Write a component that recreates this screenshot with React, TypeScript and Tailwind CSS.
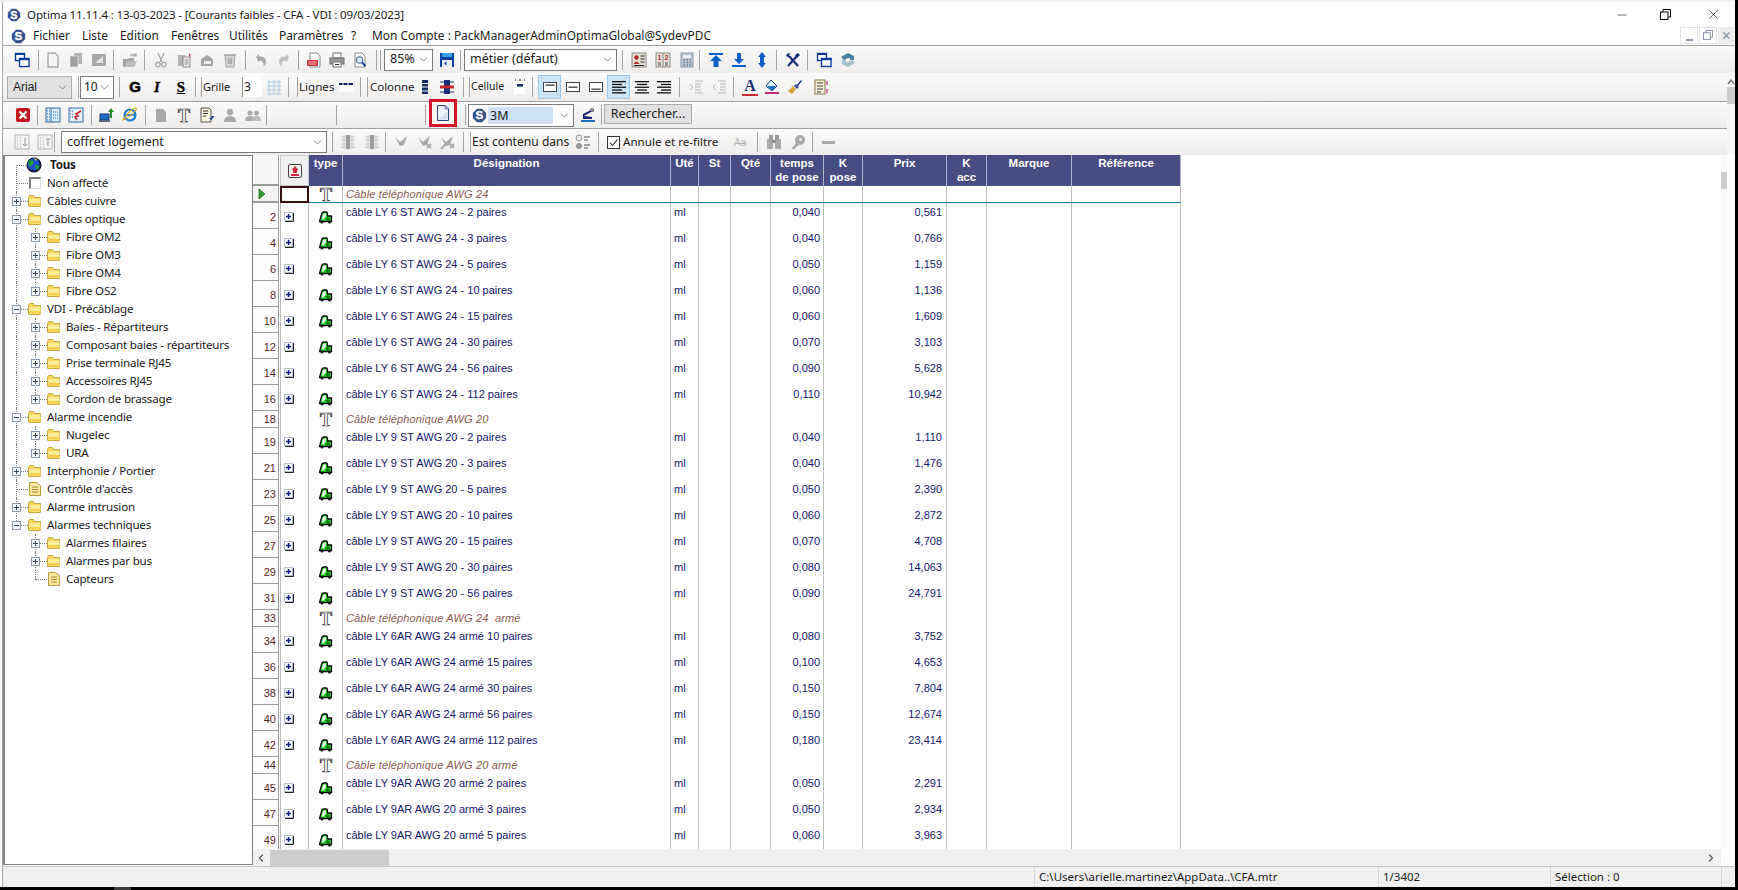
import type { ReactNode } from "react";
import { ChevronDown, ChevronLeft, ChevronRight, Minus, X } from "lucide-react";

const G = "#a9a9a9";
const NAVY = "#0b3a9e";

const Ic = ({ children, className = "" }: { children: ReactNode; className?: string }) => (
  <svg viewBox="0 0 16 16" className={`w-4 h-4 shrink-0 ${className}`}>
    {children}
  </svg>
);

const Sep = ({ className = "" }: { className?: string }) => (
  <div className={`w-px h-[20px] bg-[#a3a3a3] shrink-0 ${className}`} />
);

const Logo = ({ className = "" }: { className?: string }) => (
  <svg viewBox="0 0 18 18" className={`shrink-0 ${className}`}>
    <path d="M6 1h6l5 5v6l-5 5H6l-5-5V6z" fill="#34508f" />
    <text x="9" y="13.500" textAnchor="middle" fontSize="14" fontWeight="700" fontFamily="Liberation Sans" fill="#fff" stroke="#fff" strokeWidth=".4">S</text>
  </svg>
);

const Restore = ({ className = "" }: { className?: string }) => (
  <svg viewBox="0 0 11 11" className={`shrink-0 ${className}`}>
    <rect x=".5" y="3" width="7.500" height="7.500" fill="#fff" stroke="currentColor" />
    <path d="M3 3V.5h7.500V8H8" fill="none" stroke="currentColor" />
  </svg>
);

// --- toolbar pictures
const Win = () => (
  <Ic>
    <rect x="1.500" y="1.500" width="9" height="7" fill="#fff" stroke={NAVY} strokeWidth="1.400" />
    <rect x="1" y="1" width="10" height="2" fill={NAVY} />
    <rect x="5.500" y="6.500" width="9.500" height="8" fill="#fff" stroke={NAVY} strokeWidth="1.400" />
    <rect x="5" y="6" width="10.500" height="2.200" fill={NAVY} />
  </Ic>
);
const NewGray = () => (
  <Ic>
    <path d="M3 1h7l3 3v11H3z" fill="#f4f4f4" stroke={G} strokeWidth="1.400" />
  </Ic>
);
const CopyGray = () => (
  <Ic>
    <rect x="6" y="1" width="8" height="11" fill="#b3b3b3" />
    <path d="M2 4h8v11H2z" fill="#a0a0a0" stroke="#eee" strokeWidth=".6" />
  </Ic>
);
const SaveGray = () => (
  <Ic>
    <rect x="1" y="2" width="14" height="12" fill="#a8a8a8" />
    <path d="M4 11l8-7v7z" fill="#e4e4e4" />
  </Ic>
);
const OpenGray = () => (
  <Ic>
    <path d="M1 7h5l1-1h5v9H1z" fill="#a5a5a5" />
    <path d="M3 15l2-6h10l-3 6z" fill="#bdbdbd" />
    <path d="M8 4q3-3 6 0M14 1v3h-3" fill="none" stroke={G} strokeWidth="1.200" />
  </Ic>
);
const Cut = () => (
  <Ic>
    <path d="M5 1l4 9M11 1l-4 9" stroke={G} strokeWidth="1.300" />
    <circle cx="5" cy="12.500" r="2.200" fill="none" stroke={G} strokeWidth="1.300" />
    <circle cx="11" cy="12.500" r="2.200" fill="none" stroke={G} strokeWidth="1.300" />
  </Ic>
);
const PasteGray = () => (
  <Ic>
    <rect x="2" y="3" width="7" height="11" fill="#b5b5b5" />
    <rect x="7" y="5" width="7" height="10" fill="#eee" stroke="#8a8a8a" />
    <path d="M8.500 8h4M8.500 10h4M8.500 12h4" stroke="#8a8a8a" />
    <path d="M13 1l1 1.400 1.400.2-1 1 .3 1.400-1.700-.7z" fill="#c8405a" />
  </Ic>
);
const Stamp = () => (
  <Ic>
    <path d="M2 7l6-4 6 4v7H2z" fill="#a6a6a6" />
    <rect x="5" y="9" width="7" height="3" fill="#eee" />
  </Ic>
);
const Recycle = () => (
  <Ic>
    <path d="M3 3h10l-1 12H4z" fill="#d6d6d6" stroke={G} />
    <path d="M2 3h12M6 6l1 6M10 6l-1 6M8 6v6" stroke="#9a9a9a" />
  </Ic>
);
const Undo = () => (
  <Ic>
    <path d="M3 5l3-3v2.500c5 0 7 2 7 5 0 2-1 3.500-2.500 5 .5-3-.5-6-4.500-6V11z" fill={G} />
  </Ic>
);
const Redo = () => (
  <Ic>
    <path d="M13 5l-3-3v2.500c-5 0-7 2-7 5 0 2 1 3.500 2.500 5-.5-3 .5-6 4.500-6V11z" fill="#c0c0c0" />
  </Ic>
);
const Pdf = () => (
  <Ic>
    <path d="M4 1h7l3 3v11H4z" fill="#fff" stroke="#8a8a8a" />
    <rect x="1" y="8" width="11" height="6" fill="#d8343a" />
    <path d="M2.500 10h8M2.500 12h8" stroke="#f3b4b4" />
  </Ic>
);
const Print = () => (
  <Ic>
    <rect x="4" y="1" width="8" height="5" fill="#fff" stroke="#6f6f6f" />
    <rect x="1" y="6" width="14" height="6" fill="#9a9a9a" stroke="#6a6a6a" />
    <rect x="4" y="10" width="8" height="5" fill="#fff" stroke="#6f6f6f" />
    <path d="M6 12.500h4" stroke="#333" />
  </Ic>
);
const Preview = () => (
  <Ic>
    <path d="M3 1h7l3 3v11H3z" fill="#fff" stroke="#8a8a8a" />
    <circle cx="7.500" cy="8" r="3.200" fill="#d8eafa" stroke="#5a7fa8" strokeWidth="1.200" />
    <path d="M10 10.500l3.500 3.500" stroke={NAVY} strokeWidth="1.800" />
  </Ic>
);
const SaveBlue = () => (
  <Ic>
    <rect x="1" y="1" width="14" height="14" fill="#0d3f9f" />
    <rect x="3" y="1" width="10" height="4" fill="#37a4e8" />
    <rect x="3" y="8" width="10" height="7" fill="#e8eef8" />
    <path d="M5 11.500l2.500-2v4z" fill="#0d3f9f" />
  </Ic>
);
const Card = () => (
  <Ic>
    <rect x="1" y="1" width="14" height="14" fill="#e8e0d6" stroke="#8a8a8a" />
    <circle cx="5.500" cy="5.500" r="2.200" fill="#b02a30" />
    <path d="M2.500 12q3-5 6 0z" fill="#b02a30" />
    <path d="M9.500 4h4M9.500 7h4M9.500 10h4M3 13.500h10" stroke="#222" />
  </Ic>
);
const Num12 = () => (
  <Ic>
    <rect x="1" y="1" width="14" height="14" fill="#e9e2d9" stroke="#8a8a8a" />
    <path d="M8 1v14" stroke="#8a8a8a" />
    <text x="4.500" y="8" textAnchor="middle" fontSize="7" fontWeight="700" fontFamily="Liberation Sans" fill="#b02a30">1</text>
    <text x="11.500" y="8" textAnchor="middle" fontSize="7" fontWeight="700" fontFamily="Liberation Sans" fill="#b02a30">2</text>
    <path d="M3 11h3M3 13h3M10 11h3M10 13h3" stroke="#444" />
  </Ic>
);
const Calc = () => (
  <Ic>
    <rect x="2" y="1" width="12" height="14" fill="#b8c6d6" stroke="#8a9aae" />
    <rect x="4" y="3" width="8" height="3" fill="#e8eef4" />
    <path d="M4.500 8h1.500M7.500 8h1.500M10.500 8h1.500M4.500 10.500h1.500M7.500 10.500h1.500M10.500 10.500h1.500M4.500 13h1.500M7.500 13h1.500M10.500 13h1.500" stroke="#6a7c92" strokeWidth="1.300" />
  </Ic>
);
const ArrTop = () => (
  <Ic>
    <rect x="1" y="1" width="14" height="2" fill="#0a5fc8" />
    <path d="M8 3l6 6h-3.500v6h-5V9H2z" fill="#0a5fc8" />
  </Ic>
);
const ArrDown = () => (
  <Ic>
    <rect x="1" y="13" width="14" height="2" fill="#0a5fc8" />
    <path d="M8 12L3 7h3V1h4v6h3z" fill="#0a5fc8" />
  </Ic>
);
const ArrBoth = () => (
  <Ic>
    <path d="M8 0l4 5h-2v6h2l-4 5-4-5h2V5H4z" fill="#0a5fc8" />
  </Ic>
);
const Tools = () => (
  <Ic>
    <path d="M3 14L12 4" stroke="#16307a" strokeWidth="2.200" />
    <path d="M13 14L4 4" stroke="#16307a" strokeWidth="2.200" />
    <path d="M1 4q1-3 4-3L4 4l1 2z" fill="#16307a" />
    <path d="M10 3l3-2 2 2-3 3z" fill="#16307a" />
  </Ic>
);
const Swirl = () => (
  <Ic>
    <path d="M8 1l6 3v4h-4V6H8L4 8 1 5z" fill="#4a7f9f" />
    <path d="M8 15l-6-3V8h4v2h2l4-2 3 3z" fill="#a8c0c8" />
  </Ic>
);
const GridIcon = () => (
  <Ic>
    <path d="M1 3h14M1 7h14M1 11h14M1 15h14M3 1v15M8 1v15M13 1v15" stroke="#a8cbe8" />
  </Ic>
);
const Lines = () => (
  <Ic>
    <rect x="1" y="7" width="14" height="6" fill="#fff" />
    <rect x="1" y="4" width="14" height="2" fill="#0e1f5c" />
    <path d="M5 4v2M10 4v2" stroke="#fff" />
  </Ic>
);
const ColBars = () => (
  <Ic>
    <rect x="5" y="1" width="6" height="3" fill="#0e2f66" />
    <rect x="5" y="5" width="6" height="2.500" fill="#0e2f66" />
    <rect x="5" y="8.500" width="6" height="3" fill="#0e2f66" />
    <rect x="5" y="12.500" width="6" height="2.500" fill="#0e2f66" />
  </Ic>
);
const ColRed = () => (
  <Ic>
    <rect x="5" y="1" width="6" height="14" fill="#1a2f7a" />
    <path d="M1 3h14M1 13h14" stroke="#1a2f7a" />
    <rect x="1" y="6.500" width="14" height="3" fill="#c8262c" />
  </Ic>
);
const CellIc = () => (
  <Ic>
    <rect x="2" y="2" width="12" height="13" fill="#fff" />
    <path d="M3 1h1M7 1h2M12 1h1" stroke="#0e1f5c" />
    <rect x="5" y="5" width="6" height="2.500" fill="#0e2f66" />
  </Ic>
);
const Frame = ({ y }: { y: number }) => (
  <Ic>
    <rect x="1.500" y="3.500" width="13" height="9" fill="#fff" stroke="#444" />
    <rect x="3.500" y={y} width="9" height="1.500" fill="#555" />
  </Ic>
);
const Align = ({ kind }: { kind: "l" | "c" | "r" }) => {
  const rows = [
    [1, 14],
    [kind === "l" ? 1 : kind === "c" ? 3 : 5, 10],
    [1, 14],
    [kind === "l" ? 1 : kind === "c" ? 3 : 5, 10],
    [1, 14],
  ];
  return (
    <Ic>
      {rows.map(([x, w], i) => (
        <rect key={i} x={x} y={2 + i * 2.800} width={w} height="1.300" fill="#111" />
      ))}
    </Ic>
  );
};
const Indent = ({ flip }: { flip?: boolean }) => (
  <Ic>
    <path d={flip ? "M7 2h8M9 5h6M9 8h6M9 11h6M7 14h8" : "M7 2h8M7 5h6M7 8h6M7 11h6M7 14h8"} stroke="#b5b5b5" />
    <path d={flip ? "M5 5L2 8l3 3" : "M2 5l3 3-3 3"} fill="none" stroke="#b5b5b5" />
  </Ic>
);
const Paint = () => (
  <Ic>
    <path d="M7 1l6 6-5 5-6-5z" fill="#dff0fa" stroke="#1a4a8a" />
    <path d="M3 7h9l-4 5z" fill="#1f6fc0" />
    <rect x="1" y="13" width="14" height="2" fill="#c8287a" />
  </Ic>
);
const Brush = () => (
  <Ic>
    <path d="M9 7L14 1l1 1-5 6z" fill="#1a2f8a" />
    <path d="M9 5l3 3-2 2-3-3z" fill="#3a4fa0" />
    <path d="M6 7l3 3-4 5-4-3z" fill="#d8a040" />
  </Ic>
);
const Dims = () => (
  <Ic>
    <rect x="2" y="1" width="10" height="14" fill="#f3ecd8" stroke="#8a7a4a" />
    <path d="M4 4h6M4 7h6M4 10h6M4 13h4" stroke="#444" />
    <path d="M14 2v4M14 10v4" stroke="#c8287a" strokeWidth="1.200" />
  </Ic>
);
const RedX = () => (
  <Ic>
    <rect x="1" y="1" width="14" height="14" rx="2" fill="#c4161c" />
    <path d="M4.500 4.500l7 7M11.500 4.500l-7 7" stroke="#fff" strokeWidth="2.400" />
  </Ic>
);
const GridDots = () => (
  <Ic>
    <rect x="1" y="1" width="14" height="14" fill="#d9eefc" stroke="#2a6aa8" />
    <path d="M6 1v14" stroke="#2a6aa8" />
    <path d="M2 4h3M2 7h3M2 10h3M2 13h3M8 5h5M8 8h5M8 11h5" stroke="#2a6aa8" strokeDasharray="1 1" />
  </Ic>
);
const GridPin = () => (
  <Ic>
    <rect x="1" y="1" width="14" height="14" fill="#e4f2fc" stroke="#2a6aa8" />
    <path d="M2 4h3M2 7h3M2 10h3" stroke="#2a6aa8" strokeDasharray="1 1" />
    <path d="M13 4L8 7l2 2-3 1 2 3" fill="none" stroke="#c8262c" strokeWidth="1.600" />
  </Ic>
);
const Export = () => (
  <Ic>
    <rect x="1" y="7" width="9" height="6" fill="#1d6fc0" stroke="#12356e" />
    <rect x="0" y="13" width="11" height="2" fill="#5b6b7c" />
    <path d="M12 1l3 4h-2v6h-2V5H9z" fill="#2a8f2a" />
  </Ic>
);
const Ie = () => (
  <Ic>
    <circle cx="8" cy="8" r="5.500" fill="none" stroke="#1d7fd8" strokeWidth="2.200" />
    <path d="M3 8h10" stroke="#1d7fd8" strokeWidth="1.800" />
    <path d="M1 13q5-1 13-10 1-2-1-2-4 1-11 10-2 3-1 2z" fill="none" stroke="#e8a820" strokeWidth="1.100" />
  </Ic>
);
const DocGray = () => (
  <Ic>
    <path d="M3 2h7l3 3v10H3z" fill="#a8a8a8" />
  </Ic>
);
// the viewBox is larger than the letter's box so the glyph is not clipped
const THollow = () => (
  <svg viewBox="0 0 24 24" className="w-6 h-6 -m-1 shrink-0">
    <text x="12" y="18.500" textAnchor="middle" fontSize="18" fontWeight="700" fontFamily="Liberation Serif" fill="#fff" stroke="#1c1c1c" strokeWidth=".7">T</text>
  </svg>
);
const Note = () => (
  <Ic>
    <path d="M2 1h8l2 2v12H2z" fill="#f8f3d8" stroke="#555" />
    <path d="M4 4h5M4 6.500h5M4 9h3" stroke="#333" />
    <path d="M15 5v5l-3 3-2-2h2l1-1-1-1h3" fill={NAVY} />
  </Ic>
);
const User = () => (
  <Ic>
    <circle cx="8" cy="5" r="3.200" fill={G} />
    <path d="M2 15q0-6 6-6t6 6z" fill={G} />
  </Ic>
);
const Users = () => (
  <Ic>
    <circle cx="5" cy="6" r="2.500" fill={G} />
    <circle cx="11.500" cy="6" r="2.500" fill={G} />
    <path d="M0 14q0-5 5-5t5 5z" fill={G} />
    <path d="M7 14q0-5 4.500-5t4.500 5z" fill="#bbb" />
  </Ic>
);
const DocBlue = () => (
  <svg viewBox="0 0 12 16" className="w-[12px] h-4 shrink-0">
    <path d="M.5.500h7.500l3.500 3.500v11.500H.5z" fill="#f0f3fb" stroke="#30407a" />
    <path d="M8 .5v3.500h3.500z" fill="#c8d0e8" stroke="#30407a" strokeWidth=".6" />
    <path d="M1.500 13q5 0 9-7v8.500h-9z" fill="#d5dcf0" />
  </svg>
);
const Robot = () => (
  <Ic>
    <path d="M3 7l8-4 3-1v2l-3 1-7 4 8 1v2H3z" fill="#14236a" />
    <rect x="1" y="13" width="14" height="2" fill="#1d6fc0" />
    <circle cx="12" cy="3" r="1.500" fill="#c8c8c8" stroke="#555" />
  </Ic>
);
const SortA = ({ up }: { up?: boolean }) => (
  <Ic>
    <rect x="1" y="1" width="14" height="14" fill="#f2f2f2" stroke="#b5b5b5" />
    <path d="M3 4h1M6 4h1M3 7h1M6 7h1M3 10h1M6 10h1M3 13h1M6 13h1" stroke="#aaa" />
    <path d={up ? "M11 12V4M9 6l2-2 2 2" : "M11 4v8M9 10l2 2 2-2"} fill="none" stroke="#999" />
  </Ic>
);
const Grid2 = () => (
  <Ic>
    <path d="M1 3h14M1 6h14M1 10h14M1 13h14M4 1v14M8 1v14M12 1v14" stroke="#c2c2c2" />
    <rect x="6" y="1" width="4" height="14" fill="#9c9c9c" />
  </Ic>
);
const Tick = ({ n }: { n: number }) => (
  <Ic>
    <path d="M1 3l5 5 7-6-3 9-4 1z" fill={G} />
    {n > 0 && <path d="M10 10l4 4M14 10l-4 4" stroke={G} strokeWidth="1.800" />}
    {n > 1 && <path d="M1 15l6-6" stroke={G} strokeWidth="1.800" />}
  </Ic>
);
const Contained = () => (
  <Ic>
    <circle cx="4" cy="4" r="3" fill="#e8e8e8" stroke="#999" />
    <circle cx="4" cy="12" r="3" fill="#9a9a9a" />
    <path d="M9 3h6M9 6h4M9 11h6M9 14h4" stroke="#8a8a8a" strokeWidth="1.300" />
  </Ic>
);
const Binoc = () => (
  <Ic>
    <rect x="1" y="5" width="6" height="10" rx="1" fill={G} />
    <rect x="9" y="5" width="6" height="10" rx="1" fill={G} />
    <rect x="3" y="1" width="4" height="5" fill="#9a9a9a" />
    <rect x="9" y="1" width="4" height="5" fill="#9a9a9a" />
    <rect x="6" y="6" width="4" height="3" fill="#8a8a8a" />
  </Ic>
);
const Key = () => (
  <Ic>
    <circle cx="10" cy="6" r="5" fill={G} />
    <circle cx="10.500" cy="5.500" r="1.500" fill="#eee" />
    <path d="M6 9l-4 5v1h3l1-2 2-1 1-2z" fill={G} />
  </Ic>
);

// --- tree pictures
const Folder = () => (
  <svg viewBox="0 0 14 12" className="w-[14px] h-3 shrink-0">
    <path d="M.5 2.500l1-2h4l1 2h6v8.500q0 .5-.5.500H1q-.5 0-.5-.5z" fill="#f8d65e" stroke="#c8a83a" />
    <path d="M1.500 4h11v6.500h-11z" fill="#fcec9a" />
    <path d="M1.500 8h11v2.500h-11z" fill="#f5d050" />
  </svg>
);
const Sheet = () => (
  <svg viewBox="0 0 12 14" className="w-3 h-[14px] shrink-0">
    <path d="M.5.500h7l4 3v10h-11z" fill="#fbe8a0" stroke="#b89a3a" />
    <path d="M3 5h6M3 7.500h6M3 10h6" stroke="#a88a30" />
  </svg>
);
const Globe = () => (
  <svg viewBox="0 0 16 16" className="w-4 h-4 shrink-0">
    <circle cx="8" cy="8" r="7.500" fill="#101030" />
    <circle cx="7.500" cy="7.500" r="6" fill="#1b4fd0" />
    <path d="M3 3l5 1-1 3-3 3-2-3zM9 8l5 1-2 4-3-2z" fill="#1c9a3c" />
    <path d="M8 1l3 1-1 2z" fill="#e0d040" />
  </svg>
);
const Expander = ({ open }: { open: boolean }) => (
  <svg viewBox="0 0 9 9" className="w-[9px] h-[9px] shrink-0 bg-[#f4f6f8]">
    <rect x=".5" y=".5" width="8" height="8" fill="none" stroke="#8c9aad" />
    <path d={open ? "M2 4.500h5" : "M2 4.500h5M4.500 2v5"} stroke="#39475c" />
  </svg>
);

// --- grid pictures
const Truck = () => (
  <svg viewBox="0 0 15 13" className="w-[15px] h-[13px] shrink-0">
    <path d="M1.500 10.500L3.500 3.500Q4 1 6 1h2.500Q9.500 1 9.500 3v2H13.500v5.500z" fill="#22dc22" stroke="#0a0a0a" strokeWidth="1.300" strokeLinejoin="round" />
    <path d="M3.500 8.500L5 3.500Q5.300 2.500 6.500 2.500H8V5L5.500 8.500z" fill="#f2fff2" />
    <path d="M9.800 6v4M7.800 8h4" stroke="#0b6a0b" strokeWidth="1.300" />
    <circle cx="4" cy="11" r="1.500" fill="#111" />
    <circle cx="11.500" cy="11" r="1.500" fill="#111" />
  </svg>
);
const Plus = () => (
  <svg viewBox="0 0 10 10" className="w-[10px] h-[10px] shrink-0">
    <rect x=".5" y=".5" width="8" height="8" fill="#fff" stroke="#b4bcd4" />
    <path d="M9.500 1v8.500H1" fill="none" stroke="#222" />
    <rect x="2" y="3.800" width="5" height="1.500" fill="#0f1c86" />
    <rect x="3.800" y="2" width="1.500" height="5" fill="#0f1c86" />
  </svg>
);

const Sel = ({ label, className }: { label: string; className: string }) => (
  <div className={`shrink-0 flex items-center border border-[#7a7a7a] bg-white pl-[5px] pr-[2px] text-[#1a1a1a] ${className}`}>
    <span className="flex-1 overflow-hidden whitespace-nowrap">{label}</span>
    <ChevronDown size={13} strokeWidth={1.300} className="text-[#555] shrink-0" />
  </div>
);

const Band = ({ children, className = "" }: { children: ReactNode; className?: string }) => (
  <div className={`flex items-center bg-linear-to-b from-[#fbfbfb] via-[#f5f4f3] to-[#efedeb] ${className}`}>{children}</div>
);

// --- tree data
type Node = { label: string; lvl: 0 | 1; exp?: "plus" | "minus"; pic?: "globe" | "box" | "sheet"; line0?: boolean; line1?: "mid" | "first" | "last"; bold?: boolean };

const tree: Node[] = [
  { label: "Tous", lvl: 0, pic: "globe", bold: true },
  { label: "Non affecté", lvl: 0, pic: "box" },
  { label: "Câbles cuivre", lvl: 0, exp: "plus" },
  { label: "Câbles optique", lvl: 0, exp: "minus" },
  { label: "Fibre OM2", lvl: 1, exp: "plus", line0: true, line1: "first" },
  { label: "Fibre OM3", lvl: 1, exp: "plus", line0: true, line1: "mid" },
  { label: "Fibre OM4", lvl: 1, exp: "plus", line0: true, line1: "mid" },
  { label: "Fibre OS2", lvl: 1, exp: "plus", line0: true, line1: "last" },
  { label: "VDI - Précâblage", lvl: 0, exp: "minus" },
  { label: "Baies - Répartiteurs", lvl: 1, exp: "plus", line0: true, line1: "first" },
  { label: "Composant baies - répartiteurs", lvl: 1, exp: "plus", line0: true, line1: "mid" },
  { label: "Prise terminale RJ45", lvl: 1, exp: "plus", line0: true, line1: "mid" },
  { label: "Accessoires RJ45", lvl: 1, exp: "plus", line0: true, line1: "mid" },
  { label: "Cordon de brassage", lvl: 1, exp: "plus", line0: true, line1: "last" },
  { label: "Alarme incendie", lvl: 0, exp: "minus" },
  { label: "Nugelec", lvl: 1, exp: "plus", line0: true, line1: "first" },
  { label: "URA", lvl: 1, exp: "plus", line0: true, line1: "last" },
  { label: "Interphonie / Portier", lvl: 0, exp: "plus" },
  { label: "Contrôle d'accès", lvl: 0, pic: "sheet" },
  { label: "Alarme intrusion", lvl: 0, exp: "plus" },
  { label: "Alarmes techniques", lvl: 0, exp: "minus" },
  { label: "Alarmes filaires", lvl: 1, exp: "plus", line1: "first" },
  { label: "Alarmes par bus", lvl: 1, exp: "plus", line1: "mid" },
  { label: "Capteurs", lvl: 1, pic: "sheet", line1: "last" },
];

const dot = "absolute border-[#7f7f7f] border-dotted";

const TreeRow = ({ n, i }: { n: Node; i: number }) => {
  const last0 = i === 20;
  return (
    <div className="relative h-[18px] flex items-center">
      {/* guide lines */}
      {n.lvl === 0 && <div className={`${dot} left-[11px] border-l ${i === 0 ? "top-[9px] bottom-0" : last0 ? "top-0 h-[9px]" : "top-0 bottom-0"}`} />}
      {n.line0 && <div className={`${dot} left-[11px] top-0 bottom-0 border-l`} />}
      {n.lvl === 0 && <div className={`${dot} left-[11px] top-[9px] w-[12px] border-t`} />}
      {n.lvl === 1 && <div className={`${dot} left-[30px] border-l ${n.line1 === "last" ? "top-0 h-[9px]" : "top-0 bottom-0"}`} />}
      {n.lvl === 1 && <div className={`${dot} left-[30px] top-[9px] w-[12px] border-t`} />}
      {n.exp && (
        <div className={`absolute top-[5px] ${n.lvl === 0 ? "left-[7px]" : "left-[26px]"}`}>
          <Expander open={n.exp === "minus"} />
        </div>
      )}
      <div className={`relative flex items-center justify-center w-[16px] h-[16px] ${n.lvl === 0 ? (n.pic === "globe" ? "ml-[21px]" : "ml-[22px]") : "ml-[41px]"}`}>
        {n.pic === "globe" ? (
          <Globe />
        ) : n.pic === "box" ? (
          <div className="w-[12px] h-[12px] bg-white border-l-2 border-t-2 border-[#808080] border-r border-b border-r-[#dcdcdc] border-b-[#dcdcdc]" />
        ) : n.pic === "sheet" ? (
          <Sheet />
        ) : (
          <Folder />
        )}
      </div>
      <span className={`whitespace-nowrap text-[11.600px] tracking-[-0.2px] text-[#1a1a1a] ${n.bold ? "ml-[8px] font-bold" : "ml-[4px]"}`}>{n.label}</span>
    </div>
  );
};

// --- grid data
type Row = { n: number; t: string; a?: string; b?: string; title?: boolean };

const rows: Row[] = [
  { n: 2, t: "câble LY 6 ST AWG 24 - 2 paires", a: "0,040", b: "0,561" },
  { n: 4, t: "câble LY 6 ST AWG 24 - 3 paires", a: "0,040", b: "0,766" },
  { n: 6, t: "câble LY 6 ST AWG 24 - 5 paires", a: "0,050", b: "1,159" },
  { n: 8, t: "câble LY 6 ST AWG 24 - 10 paires", a: "0,060", b: "1,136" },
  { n: 10, t: "câble LY 6 ST AWG 24 - 15 paires", a: "0,060", b: "1,609" },
  { n: 12, t: "câble LY 6 ST AWG 24 - 30 paires", a: "0,070", b: "3,103" },
  { n: 14, t: "câble LY 6 ST AWG 24 - 56 paires", a: "0,090", b: "5,628" },
  { n: 16, t: "câble LY 6 ST AWG 24 - 112 paires", a: "0,110", b: "10,942" },
  { n: 18, t: "Câble téléphonique AWG 20", title: true },
  { n: 19, t: "câble LY 9 ST AWG 20 - 2 paires", a: "0,040", b: "1,110" },
  { n: 21, t: "câble LY 9 ST AWG 20 - 3 paires", a: "0,040", b: "1,476" },
  { n: 23, t: "câble LY 9 ST AWG 20 - 5 paires", a: "0,050", b: "2,390" },
  { n: 25, t: "câble LY 9 ST AWG 20 - 10 paires", a: "0,060", b: "2,872" },
  { n: 27, t: "câble LY 9 ST AWG 20 - 15 paires", a: "0,070", b: "4,708" },
  { n: 29, t: "câble LY 9 ST AWG 20 - 30 paires", a: "0,080", b: "14,063" },
  { n: 31, t: "câble LY 9 ST AWG 20 - 56 paires", a: "0,090", b: "24,791" },
  { n: 33, t: "Câble téléphonique AWG 24  armé", title: true },
  { n: 34, t: "câble LY 6AR AWG 24 armé 10 paires", a: "0,080", b: "3,752" },
  { n: 36, t: "câble LY 6AR AWG 24 armé 15 paires", a: "0,100", b: "4,653" },
  { n: 38, t: "câble LY 6AR AWG 24 armé 30 paires", a: "0,150", b: "7,804" },
  { n: 40, t: "câble LY 6AR AWG 24 armé 56 paires", a: "0,150", b: "12,674" },
  { n: 42, t: "câble LY 6AR AWG 24 armé 112 paires", a: "0,180", b: "23,414" },
  { n: 44, t: "Câble téléphonique AWG 20 armé", title: true },
  { n: 45, t: "câble LY 9AR AWG 20 armé 2 paires", a: "0,050", b: "2,291" },
  { n: 47, t: "câble LY 9AR AWG 20 armé 3 paires", a: "0,050", b: "2,934" },
  { n: 49, t: "câble LY 9AR AWG 20 armé 5 paires", a: "0,060", b: "3,963" },
];

const cell = "border-r border-[#bdbdbd] shrink-0";

const GridRow = ({ r }: { r: Row }) => (
  <div className={`flex ${r.title ? "h-[17px]" : "h-[26px]"} font-['Liberation_Sans',Arial,sans-serif] text-[11px] leading-[14px]`}>
    <div className={`w-[26px] shrink-0 bg-[#fdfdfd] border-r border-b border-[#9a9a9a] text-right pr-[2px] text-[#5a1f1f] ${r.title ? "pt-[1px]" : "pt-[7px]"}`}>{r.n}</div>
    <div className="w-px shrink-0" />
    <div className={`w-[29px] ${cell} border-l flex justify-start pl-[3px] ${r.title ? "" : "pt-[9px]"}`}>{!r.title && <Plus />}</div>
    <div className={`w-[34px] ${cell} flex justify-center ${r.title ? "" : "pt-[8px]"}`}>{r.title ? <THollow /> : <Truck />}</div>
    {r.title ? (
      <div className={`w-[328px] ${cell} pl-[3px] pt-[1px] italic text-[#8a5a52] whitespace-pre tracking-[0.150px]`}>{r.t}</div>
    ) : (
      <div className={`w-[328px] ${cell} pl-[3px] pt-[2px] text-[#15156a] whitespace-pre`}>{r.t}</div>
    )}
    <div className={`w-[28px] ${cell} pl-[3px] pt-[2px] text-[#15156a]`}>{r.title ? "" : "ml"}</div>
    <div className={`w-[32px] ${cell}`} />
    <div className={`w-[40px] ${cell}`} />
    <div className={`w-[53px] ${cell} text-right pr-[3px] pt-[2px] text-[#15156a]`}>{r.a}</div>
    <div className={`w-[39px] ${cell}`} />
    <div className={`w-[84px] ${cell} text-right pr-[4px] pt-[2px] text-[#15156a]`}>{r.b}</div>
    <div className={`w-[40px] ${cell}`} />
    <div className={`w-[85px] ${cell}`} />
    <div className={`w-[109px] ${cell}`} />
  </div>
);

const head = "shrink-0 bg-[#474d82] border-r border-[#b4b7cc] text-center text-white font-bold pt-[1px]";

export default function App() {
  return (
    <div className="w-[1738px] h-[890px] overflow-hidden flex bg-white text-[#1a1a1a] font-['Noto_Sans',sans-serif] text-[11.600px]">
      <div className="w-[1735px] h-full flex flex-col">
        <div className="h-[2px] bg-[#f0f0f0] shrink-0" />
        <div className="flex-1 min-h-0 flex flex-col ml-[2px] border-l border-[#a8a8a8]">
          {/* title bar */}
          <div className="h-[25px] shrink-0 flex items-center pl-[4px]">
            <Logo className="w-[14px] h-[14px]" />
            <span className="ml-[6px] whitespace-nowrap tracking-[-0.16px]">Optima 11.11.4 : 13-03-2023 - [Courants faibles - CFA - VDI : 09/03/2023]</span>
            <div className="ml-auto flex items-center">
              <Minus size={14} strokeWidth={1} className="text-black mr-[31px]" />
              <Restore className="w-[11px] h-[11px] text-black mr-[35px]" />
              <X size={15} strokeWidth={1} className="text-black mr-[14px]" />
            </div>
          </div>
          {/* menu */}
          <div className="h-[19px] shrink-0 flex items-center border-b border-[#a0a0a0] pl-[8px] text-[11.900px]">
            <Logo className="w-[15px] h-[15px]" />
            <span className="ml-[7px] w-[49px]">Fichier</span>
            <span className="w-[38px]">Liste</span>
            <span className="w-[51px]">Edition</span>
            <span className="w-[58px]">Fenêtres</span>
            <span className="w-[50px]">Utilités</span>
            <span className="w-[72px]">Paramètres</span>
            <span className="w-[21px]">?</span>
            <span className="whitespace-nowrap">Mon Compte : PackManagerAdminOptimaGlobal@SydevPDC</span>
            <div className="ml-auto flex -mt-[2px] mr-px gap-px">
              <div className="w-[18px] h-[17px] border border-[#e3e3e3] flex items-end justify-center pb-[2px]"><div className="w-[7px] h-[2px] bg-[#8b97a8]" /></div>
              <div className="w-[18px] h-[17px] border border-[#e3e3e3] flex items-center justify-center"><Restore className="w-[10px] h-[10px] text-[#7b8798]" /></div>
              <div className="w-[16px] h-[17px] bg-[#eeeeee] flex items-center justify-center"><X size={11} strokeWidth={3} className="text-[#8b97a8]" /></div>
            </div>
          </div>

          {/* toolbar 1 */}
          <Band className="h-[27px] shrink-0 pl-[11px]">
            <Win />
            <Sep className="ml-[8px]" />
            <div className="flex items-center gap-[7px] ml-[6px]"><NewGray /><CopyGray /><SaveGray /></div>
            <Sep className="ml-[6px]" />
            <div className="ml-[8px]"><OpenGray /></div>
            <Sep className="ml-[6px]" />
            <div className="flex items-center gap-[7px] ml-[8px]"><Cut /><PasteGray /><Stamp /><Recycle /></div>
            <Sep className="ml-[7px]" />
            <div className="flex items-center gap-[7px] ml-[7px]"><Undo /><Redo /></div>
            <Sep className="ml-[6px]" />
            <div className="flex items-center gap-[7px] ml-[7px]"><Pdf /><Print /><Preview /></div>
            <Sep className="ml-[8px]" />
            <Sep className="ml-[3px]" />
            <Sel label="85%" className="w-[49px] h-[22px] ml-[3px] text-[12.500px]" />
            <div className="ml-[6px]"><SaveBlue /></div>
            <Sep className="ml-[5px]" />
            <Sel label="métier (défaut)" className="w-[153px] h-[22px] ml-[3px] text-[12.500px]" />
            <Sep className="ml-[5px]" />
            <div className="flex items-center gap-[8px] ml-[8px]"><Card /><Num12 /><Calc /></div>
            <Sep className="ml-[4px]" />
            <div className="flex items-center gap-[7px] ml-[8px]"><ArrTop /><ArrDown /><ArrBoth /></div>
            <Sep className="ml-[6px]" />
            <div className="ml-[8px]"><Tools /></div>
            <Sep className="ml-[6px]" />
            <div className="flex items-center gap-[8px] ml-[8px]"><Win /><Swirl /></div>
          </Band>

          <div className="h-[82px] shrink-0 flex">
            <div className="w-[1724px] shrink-0 flex flex-col">
              {/* toolbar 2 */}
              <Band className="h-[29px] border-b border-[#a0a0a0] pl-[4px]">
                <Sel label="Arial" className="w-[65px] h-[23px] !bg-[#e1e1e1] !border-[#adadad] font-['Liberation_Sans',sans-serif] text-[12px]" />
                <Sep className="ml-[6px] !h-[22px]" />
                <Sel label="10" className="w-[34px] h-[23px] ml-px !pl-[3px] text-[12px] overflow-hidden" />
                <Sep className="ml-[5px]" />
                <span className="ml-[9px] w-[12px] text-center font-['Liberation_Sans',sans-serif] font-bold text-[15px] text-black [-webkit-text-stroke:0.6px_black]">G</span>
                <span className="ml-[12px] w-[8px] text-center font-['Liberation_Serif',serif] italic font-bold text-[15px] text-black [-webkit-text-stroke:0.4px_black]">I</span>
                <span className="ml-[15px] w-[10px] text-center font-['Liberation_Serif',serif] font-bold text-[15px] text-black underline [-webkit-text-stroke:0.3px_black]">S</span>
                <Sep className="ml-[9px]" />
                <Sep className="ml-[5px]" />
                <span className="ml-px w-[39px] text-[11px]">Grille</span>
                <Sep className="!bg-[#8a8a8a]" />
                <div className="w-[19px] h-[20px] bg-white pl-px leading-[20px] text-[12px]">3</div>
                <div className="ml-[4px]"><GridIcon /></div>
                <Sep className="ml-[6px]" />
                <Sep className="ml-[8px]" />
                <span className="ml-px w-[39px] whitespace-nowrap">Lignes</span>
                <Lines />
                <Sep className="ml-[6px]" />
                <Sep className="ml-[6px]" />
                <span className="ml-[2px] w-[42px] whitespace-nowrap tracking-[-0.1px]">Colonne</span>
                <div className="ml-[5px]"><ColBars /></div>
                <div className="ml-[6px]"><ColRed /></div>
                <Sep className="ml-[8px]" />
                <Sep className="ml-[5px]" />
                <span className="ml-px w-[41px] text-[10.500px]">Cellule</span>
                <CellIc />
                <Sep className="ml-[4px]" />
                <div className="ml-[5px] w-[23px] h-[24px] bg-[#cce4f7] border border-[#99c6eb] flex items-center justify-center"><Frame y={5.500} /></div>
                <div className="ml-[4px]"><Frame y={7.500} /></div>
                <div className="ml-[7px]"><Frame y={9.500} /></div>
                <div className="ml-[3px] w-[23px] h-[24px] bg-[#cce4f7] border border-[#99c6eb] flex items-center justify-center"><Align kind="l" /></div>
                <div className="ml-[4px]"><Align kind="c" /></div>
                <div className="ml-[6px]"><Align kind="r" /></div>
                <Sep className="ml-[7px]" />
                <div className="ml-[8px]"><Indent /></div>
                <div className="ml-[7px]"><Indent flip /></div>
                <Sep className="ml-[6px]" />
                <div className="ml-[8px] w-4 h-[18px] flex flex-col items-center font-['Liberation_Serif',serif] font-bold text-[16px] leading-[15px] text-[#12307a] border-b-2 border-[#c8262c]">A</div>
                <div className="ml-[6px]"><Paint /></div>
                <div className="ml-[7px]"><Brush /></div>
                <div className="ml-[10px]"><Dims /></div>
              </Band>
              {/* toolbar 3 */}
              <Band className="h-[27px] border-b border-[#a0a0a0] pl-[12px]">
                <RedX />
                <Sep className="ml-[6px]" />
                <div className="flex items-center gap-[7px] ml-[7px]"><GridDots /><GridPin /></div>
                <Sep className="ml-[7px]" />
                <div className="flex items-center gap-[7px] ml-[7px]"><Export /><Ie /></div>
                <Sep className="ml-[7px]" />
                <div className="flex items-center gap-[7px] ml-[7px]"><DocGray /><THollow /><Note /><User /><Users /></div>
                <Sep className="ml-[5px]" />
                <Sep className="ml-[69px]" />
                <Sep className="ml-[88px]" />
                <div className="ml-[3px] -mt-[4px] w-[28px] h-[28px] border-[3px] border-[#d2142a] flex items-center justify-center shrink-0 bg-[#f7f6f5]"><DocBlue /></div>
                <Sep className="ml-[8px]" />
                <div className="ml-[2px] h-[23px] w-[106px] border border-[#7a7a7a] bg-white flex items-center pl-[3px] pr-[2px] shrink-0 text-[12.500px]">
                  <Logo className="w-[15px] h-[15px]" />
                  <span className="w-[65px] ml-px pl-[2px] h-[17px] leading-[17px] bg-[#cde0f5]">3M</span>
                  <ChevronDown size={13} strokeWidth={1.300} className="text-[#555] ml-auto" />
                </div>
                <div className="ml-[6px]"><Robot /></div>
                <Sep className="ml-[5px]" />
                <div className="ml-[2px] w-[88px] h-[20px] -mt-[2px] bg-[#e1e1e1] border border-[#adadad] flex items-center justify-center whitespace-nowrap text-[12.500px]">Rechercher...</div>
              </Band>
              {/* toolbar 4 */}
              <Band className="h-[26px] pl-[11px]">
                <SortA />
                <div className="ml-[7px]"><SortA up /></div>
                <Sep className="ml-px" />
                <Sel label="coffret logement" className="w-[266px] h-[22px] ml-[6px] text-[12.300px]" />
                <Sep className="ml-[5px]" />
                <div className="flex items-center gap-[8px] ml-[7px]"><Grid2 /><Grid2 /></div>
                <Sep className="ml-[5px]" />
                <div className="flex items-center gap-[7px] ml-[8px]"><Tick n={0} /><Tick n={1} /><Tick n={2} /></div>
                <Sep className="ml-[7px]" />
                <Sep className="ml-[6px]" />
                <span className="ml-px w-[98px] whitespace-nowrap text-[12.100px]">Est contenu dans</span>
                <div className="ml-[5px]"><Contained /></div>
                <Sep className="ml-[7px]" />
                <div className="ml-[8px] w-[13px] h-[13px] border border-[#333] bg-white flex items-center justify-center shrink-0">
                  <svg viewBox="0 0 11 11" className="w-[11px] h-[11px]"><path d="M2 5.500l2.500 3 5-6" fill="none" stroke="#222" strokeWidth="1.100" /></svg>
                </div>
                <span className="ml-[3px] w-[96px] whitespace-nowrap">Annule et re-filtre</span>
                <span className="ml-[15px] w-[17px] text-[10px] text-[#b5b5b5] font-['Liberation_Sans',sans-serif] line-through">Aa</span>
                <Sep className="ml-[6px]" />
                <div className="flex items-center gap-[8px] ml-[8px]"><Binoc /><Key /></div>
                <Sep className="ml-[6px]" />
                <div className="ml-[9px] w-[13px] h-[3px] bg-[#a9a9a9]" />
              </Band>
            </div>
            {/* outer scrollbar */}
            <div className="flex-1 flex flex-col items-stretch bg-[#f7f7f7]">
              <svg viewBox="0 0 8 6" className="w-[8px] h-[6px] mt-[6px]">
                <path d="M1 5l3-4 3 4" fill="none" stroke="#777" strokeWidth="1.500" />
              </svg>
              <div className="mt-[2px] h-[17px] bg-[#cdcdcd]" />
            </div>
          </div>

          {/* main area */}
          <div className="flex-1 min-h-0 flex">
            {/* tree */}
            <div className="w-[250px] shrink-0 h-[710px] border border-[#808080] border-l-2 bg-white overflow-hidden">
              {tree.map((n, i) => (
                <TreeRow key={n.label} n={n} i={i} />
              ))}
            </div>

            {/* grid */}
            <div className="w-[1468px] shrink-0 flex flex-col h-[711px]">
              <div className="flex h-[31px] shrink-0 font-['Liberation_Sans',Arial,sans-serif] text-[11.500px] leading-[14px]">
                <div className="w-[26px] shrink-0 bg-[#f6f6f6] border-b-2 border-r border-[#9a9a9a]" />
                <div className="w-px shrink-0" />
                <div className="w-[29px] shrink-0 bg-[#f0f0f0] border border-[#c8c8c8] flex items-center justify-center">
                  <svg viewBox="0 0 14 14" className="w-[14px] h-[14px]">
                    <rect x=".5" y=".5" width="13" height="13" rx="1.500" fill="#f4f0ea" stroke="#444" />
                    <path d="M7 2l3.500 4H9v3H5V6H3.500z" fill="#d22a3c" />
                    <rect x="3" y="10" width="8" height="2" fill="#d22a3c" />
                  </svg>
                </div>
                <div className={`${head} w-[34px]`}>type</div>
                <div className={`${head} w-[328px]`}>Désignation</div>
                <div className={`${head} w-[28px]`}>Uté</div>
                <div className={`${head} w-[32px]`}>St</div>
                <div className={`${head} w-[40px]`}>Qté</div>
                <div className={`${head} w-[53px]`}>temps<br />de pose</div>
                <div className={`${head} w-[39px]`}>K<br />pose</div>
                <div className={`${head} w-[84px]`}>Prix</div>
                <div className={`${head} w-[40px]`}>K<br />acc</div>
                <div className={`${head} w-[85px]`}>Marque</div>
                <div className={`${head} w-[109px]`}>Référence</div>
              </div>

              <div className="flex-1 min-h-0 overflow-hidden">
                {/* current row */}
                <div className="flex h-[17px] font-['Liberation_Sans',Arial,sans-serif] text-[11px] leading-[14px]">
                  <div className="w-[26px] shrink-0 bg-[#f4f4f4] border-r border-b-2 border-[#9a9a9a] pl-[5px] pt-[2px]">
                    <svg viewBox="0 0 8 12" className="w-[8px] h-[12px]"><path d="M1 1l6 5-6 5z" fill="#2fa02f" stroke="#0f5a0f" strokeWidth=".7" /></svg>
                  </div>
                  <div className="w-px shrink-0" />
                  <div className="w-[29px] shrink-0 border-2 border-[#3a0f14] bg-white" />
                  <div className="flex border-b border-[#1f7fa6]">
                    <div className={`w-[34px] ${cell} flex justify-center`}><THollow /></div>
                    <div className={`w-[328px] ${cell} pl-[3px] pt-[1px] italic text-[#8a5a52] tracking-[0.150px]`}>Câble téléphonique AWG 24</div>
                    <div className={`w-[28px] ${cell}`} />
                    <div className={`w-[32px] ${cell}`} />
                    <div className={`w-[40px] ${cell}`} />
                    <div className={`w-[53px] ${cell}`} />
                    <div className={`w-[39px] ${cell}`} />
                    <div className={`w-[84px] ${cell}`} />
                    <div className={`w-[40px] ${cell}`} />
                    <div className={`w-[85px] ${cell}`} />
                    <div className={`w-[109px] ${cell}`} />
                  </div>
                </div>
                {rows.map((r) => (
                  <GridRow key={r.n} r={r} />
                ))}
              </div>

              {/* horizontal scrollbar */}
              <div className="h-[17px] shrink-0 bg-[#f0f0f0] flex items-center">
                <ChevronLeft size={12} strokeWidth={2.500} className="ml-[2px] text-[#555] shrink-0" />
                <div className="ml-[3px] w-[119px] h-[16px] bg-[#cdcdcd]" />
                <ChevronRight size={12} strokeWidth={2.500} className="ml-auto mr-[4px] text-[#555] shrink-0" />
              </div>
            </div>

            {/* inner scrollbar */}
            <div className="w-[6px] shrink-0 h-[694px] bg-[#fbfbfb] flex flex-col">
              <div className="h-[17px]" />
              <div className="h-[17px] bg-[#cdcdcd]" />
            </div>
          </div>

          {/* status bar */}
          <div className="h-[21px] shrink-0 flex items-center border-t border-[#c4c4c4] bg-[#f0f0f0] text-[11.500px] whitespace-nowrap">
            <div className="w-[1031px] h-full shrink-0" />
            <div className="w-[344px] h-full shrink-0 border-l border-[#d4d4d4] pl-[4px] leading-[20px]">C:\Users\arielle.martinez\AppData..\CFA.mtr</div>
            <div className="w-[172px] h-full shrink-0 border-l border-[#d4d4d4] pl-[4px] leading-[20px]">1/3402</div>
            <div className="w-[172px] h-full shrink-0 border-x border-[#d4d4d4] pl-[4px] leading-[20px]">Sélection : 0</div>
          </div>
        </div>
        <div className="h-[3px] shrink-0 bg-black flex">
          <div className="ml-[114px] w-[17px] bg-[#3a3a3a]" />
        </div>
      </div>
      <div className="w-[3px] h-full bg-black" />
    </div>
  );
}
